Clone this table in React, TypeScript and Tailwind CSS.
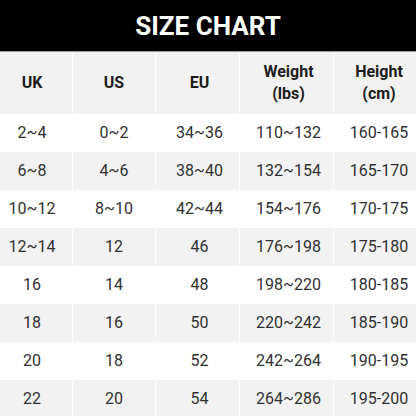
const header = [
  { label: "UK" },
  { label: "US" },
  { label: "EU" },
  { label: "Weight", sub: "(lbs)" },
  { label: "Height", sub: "(cm)" },
];

const rows = [
  ["2~4", "0~2", "34~36", "110~132", "160-165"],
  ["6~8", "4~6", "38~40", "132~154", "165-170"],
  ["10~12", "8~10", "42~44", "154~176", "170-175"],
  ["12~14", "12", "46", "176~198", "175-180"],
  ["16", "14", "48", "198~220", "180-185"],
  ["18", "16", "50", "220~242", "185-190"],
  ["20", "18", "52", "242~264", "190-195"],
  ["22", "20", "54", "264~286", "195-200"],
];

const cellPad = ["pr-2", "", "pl-1", "pl-1", "pl-2"];

export default function App() {
  return (
    <div className="w-[416px] h-[416px] overflow-hidden bg-white font-['Roboto',sans-serif]">
      {/* Title bar */}
      <div className="h-[52px] bg-black flex items-center justify-center border-b border-[#9a9a9a]">
        <h1 className="text-white font-bold text-[26px] leading-none">SIZE CHART</h1>
      </div>

      {/* Column headings */}
      <div className="grid grid-cols-[72px_82px_83px_93px_1fr] gap-x-px h-[62px]">
        {header.map((h, i) => (
          <div
            key={h.label}
            className={`bg-[#f2f2f2] flex flex-col items-center justify-center text-[16px] font-bold leading-[22px] text-[#1c1c1c] ${cellPad[i]}`}
          >
            <span>{h.label}</span>
            {h.sub && <span>{h.sub}</span>}
          </div>
        ))}
      </div>

      {/* Data rows */}
      {rows.map((r, ri) => (
        <div key={ri} className="grid grid-cols-[72px_82px_83px_93px_1fr] gap-x-px h-[38px]">
          {r.map((v, ci) => (
            <div
              key={ci}
              className={`flex items-center justify-center text-[16px] text-[#303030] ${
                ri % 2 === 1 ? "bg-[#f2f2f2]" : "bg-white"
              } ${cellPad[ci]}`}
            >
              {v}
            </div>
          ))}
        </div>
      ))}
    </div>
  );
}
